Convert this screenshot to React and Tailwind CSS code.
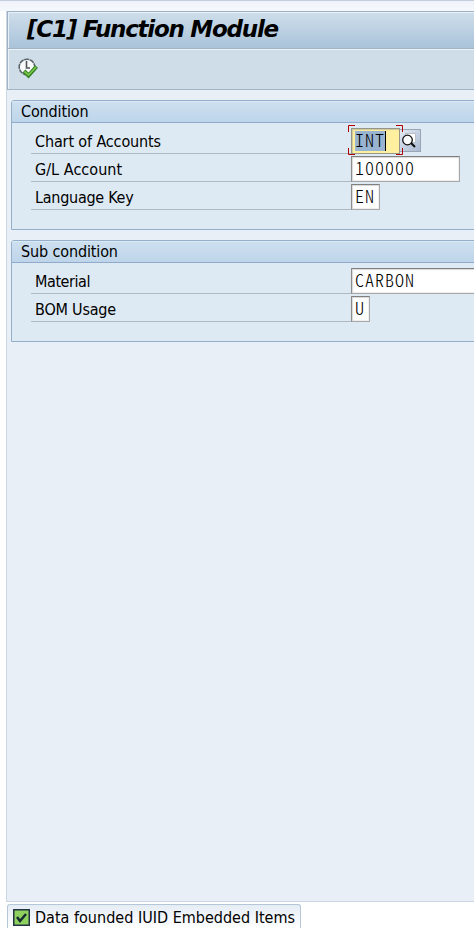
const label = "font-['DejaVu_Sans_Condensed','DejaVu_Sans',sans-serif] [font-stretch:condensed] text-black whitespace-nowrap";

function Value({ children, className = "" }) {
  return (
    <span
      className={`block h-[20px] whitespace-pre font-['Noto_Sans_CJK_KR',sans-serif] text-[18px] font-light leading-[17px] tracking-[1px] text-black [font-feature-settings:'hwid'] ${className}`}
    >
      {children}
    </span>
  );
}

function Field({ width, children }) {
  return (
    <div className={`h-[26px] shrink-0 border border-t-[#808080] border-l-[#8c8c8c] border-r-[#a8a8a8] border-b-[#a8a8a8] bg-white pt-[2px] pl-[3px] shadow-[inset_1px_1px_1px_#d8d8d8,inset_-1px_-1px_0_#efefef] ${width}`}>
      <Value>{children}</Value>
    </div>
  );
}

function Row({ text, spacing, children }) {
  return (
    <div className="flex h-[28px] items-start">
      <div className={`${label} ml-[19px] h-[26px] w-[320px] shrink-0 border-b border-[#b0b8c0] pl-[4px] text-[16px] leading-[27px] ${spacing}`}>
        {text}
      </div>
      {children}
    </div>
  );
}

function Group({ title, height, children }) {
  return (
    <section className={`w-[480px] rounded-tl-[3px] border border-[#93afca] bg-[#deeaf3] ${height}`}>
      <h2 className={`${label} h-[22px] rounded-tl-[2px] border-b border-[#8faacb] bg-linear-to-b from-[#cee0f0] to-[#bed5e9] pl-[9px] text-[16px] leading-[22px] tracking-[-0.130px] shadow-[inset_0_1px_0_#dce9f4]`}>
        {title}
      </h2>
      <div className="pt-[5px]">{children}</div>
    </section>
  );
}

function SearchHelp() {
  return (
    <div className="mt-px flex h-[23px] w-[21px] items-start border border-l-0 border-[#9ba5b4] bg-linear-to-br from-[#e3eaf3] to-[#a9bad3]">
      <svg width="20" height="20" viewBox="0 0 20 20">
        <rect x="5.500" y="3.500" width="10" height="9" fill="#fff" stroke="#b9c1ca" />
        <circle cx="7.500" cy="10" r="4.800" fill="#f8fafc" stroke="#111" strokeWidth="1.300" />
        <path d="M11 13l4 4" stroke="#111" strokeWidth="2.200" />
      </svg>
    </div>
  );
}

function FocusFrame() {
  return (
    <svg className="absolute -top-[3px] -left-[3px]" width="56" height="31" viewBox="0 0 56 31" fill="none" stroke="#b00000">
      <path d="M.5 7V.5H7M48 .5h6.500V7M.5 23v6.500H7M48 29.500h6.500V23" />
    </svg>
  );
}

export default function App() {
  return (
    <div className="flex h-[928px] w-[474px] flex-col overflow-hidden bg-white">
      <div className="h-[11px] shrink-0 border-t border-[#c5cddd] bg-linear-to-b from-[#eff3fa] to-[#f5f8fb]" />
      <main className="ml-[6px] h-[891px] shrink-0 overflow-hidden border-b border-l border-[#cdd7e3] bg-[#e8eff6]">
        <header className="h-[37px] border-t border-l border-[#9fb0c2] bg-linear-to-b from-[#cfdeea] to-[#a9c3da] shadow-[inset_1px_1px_0_#e7f0f7]">
          <h1 className="pl-[19px] font-['DejaVu_Sans',sans-serif] text-[23px] leading-[34px] font-bold tracking-[-1.250px] whitespace-nowrap text-black italic">[C1] Function Module</h1>
        </header>
        <div className="h-[42px] border-y border-l border-[#a2b5c7] bg-[#cfdde8] pt-[9px] pl-[10px] shadow-[inset_1px_1px_0_#eaf2f7]">
          <svg width="20" height="21" viewBox="0 0 20 21" fill="none">
            <circle cx="9" cy="9" r="7.800" fill="#f9fafa" stroke="#59636a" strokeWidth="1.600" strokeDasharray="5 .6" />
            <path d="M8.500 3v7H12" stroke="#4f5559" strokeWidth="1.600" />
            <path d="M6 13l4.500 4.500L18.500 8.500" stroke="#347f24" strokeWidth="4" />
            <path d="M6.500 13.500l4 3.500L18 9" stroke="#76c74a" strokeWidth="1.800" />
          </svg>
        </div>
        <div className="flex flex-col gap-[10px] pt-[10px] pl-[4px]">
          <Group title="Condition" height="h-[130px]">
            <Row text="Chart of Accounts" spacing="tracking-[-0.130px]">
              <div className="relative flex items-start">
                <div className="h-[26px] w-[49px] border border-[#96958a] bg-[#fff0a0] pt-[2px] pl-[3px] shadow-[inset_1px_1px_1px_#cfc69a]">
                  <Value className="w-[31px] border-r border-black bg-[#99b4d1]">INT</Value>
                </div>
                <SearchHelp />
                <FocusFrame />
              </div>
            </Row>
            <Row text="G/L Account" spacing="tracking-[0.050px]"><Field width="w-[109px]">100000</Field></Row>
            <Row text="Language Key" spacing="tracking-[-0.270px]"><Field width="w-[29px]">EN</Field></Row>
          </Group>
          <Group title="Sub condition" height="h-[102px]">
            <Row text="Material" spacing="tracking-[-0.430px]"><Field width="w-[140px]">CARBON</Field></Row>
            <Row text="BOM Usage" spacing="tracking-[-0.200px]"><Field width="w-[19px]">U</Field></Row>
          </Group>
        </div>
      </main>
      <footer className="mt-[2px] ml-[7px] flex h-[24px] w-[294px] shrink-0 items-start gap-[5px] rounded-t-[3px] border border-b-0 border-[#b5c6d8] bg-linear-to-b from-[#e5edf5] to-white pt-[4px] pl-[5px]">
        <svg className="shrink-0" width="17" height="17" viewBox="0 0 17 17">
          <rect x=".75" y=".75" width="15.500" height="15.500" fill="#8ed15e" stroke="#223344" strokeWidth="1.500" />
          <path d="M4 8l3 4 6-7" fill="none" stroke="#172b32" strokeWidth="2.500" />
        </svg>
        <p className={`${label} text-[16px] leading-[17px] tracking-[0.010px]`}>Data founded IUID Embedded Items</p>
      </footer>
    </div>
  );
}
